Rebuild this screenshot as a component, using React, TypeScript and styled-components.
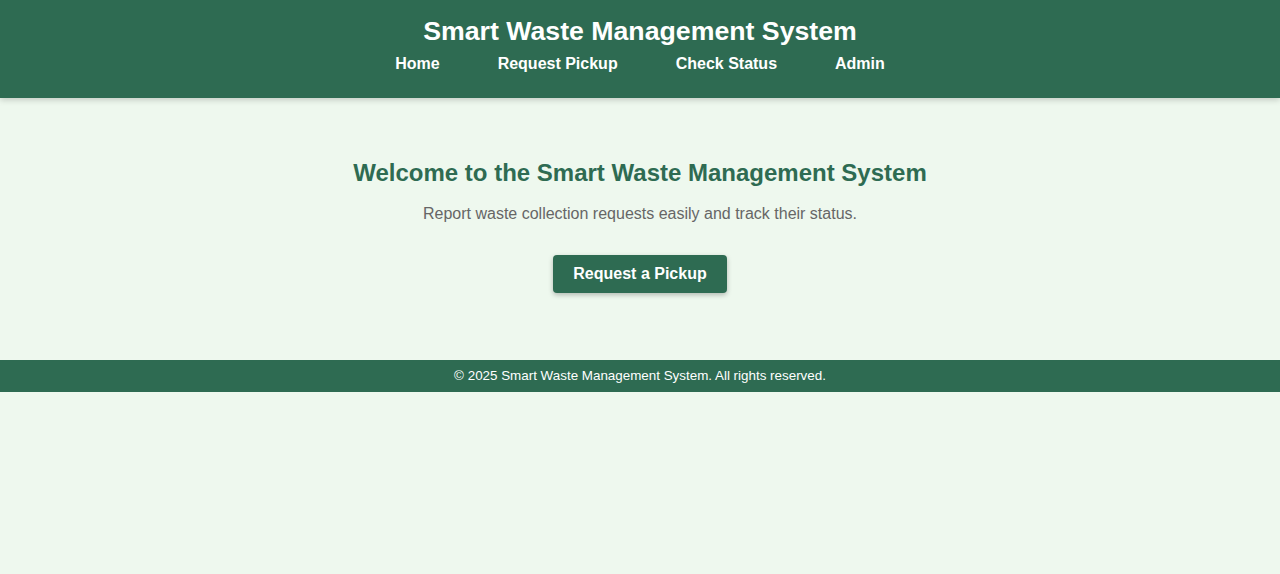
import React from "react";
import styled, { createGlobalStyle } from "styled-components";

const GlobalStyle = createGlobalStyle`
  html, body {
    margin: 0;
    padding: 0;
    background: #eef8ee;
    font-family: "Liberation Sans", Arial, sans-serif;
  }
`;

const Header = styled.header`
  background: #2e6b52;
  color: #ffffff;
  padding: 15px 0 22px;
  text-align: center;
  box-shadow: 0 2px 6px rgba(0, 0, 0, 0.18);
`;

const Title = styled.h1`
  margin: 0;
  font-size: 26.7px;
  line-height: 32px;
  font-weight: bold;
`;

const Nav = styled.nav`
  display: flex;
  justify-content: center;
  gap: 58px;
  margin-top: 5px;
`;

const NavLink = styled.a`
  color: #ffffff;
  text-decoration: none;
  font-size: 16px;
  font-weight: bold;
  line-height: 24px;
`;

const Hero = styled.main`
  text-align: center;
  padding: 60px 20px 67px;
`;

const Heading = styled.h2`
  margin: 0;
  color: #2e6b52;
  font-size: 24px;
  line-height: 30px;
`;

const Lead = styled.p`
  margin: 16px 0 0;
  color: #666666;
  font-size: 16px;
  line-height: 20px;
`;

const Button = styled.button`
  margin-top: 31px;
  background: #2e6b52;
  color: #ffffff;
  border: none;
  border-radius: 4px;
  padding: 0 20px;
  height: 38px;
  font-family: inherit;
  font-size: 16px;
  font-weight: bold;
  cursor: pointer;
  box-shadow: 0 2px 5px rgba(0, 0, 0, 0.25);
`;

const Footer = styled.footer`
  background: #2e6b52;
  color: #ffffff;
  text-align: center;
  font-size: 13.4px;
  line-height: 32px;
`;

export default function App() {
  const links = ["Home", "Request Pickup", "Check Status", "Admin"];
  return (
    <>
      <GlobalStyle />
      <Header>
        <Title>Smart Waste Management System</Title>
        <Nav>
          {links.map((l) => (
            <NavLink key={l} href="#">
              {l}
            </NavLink>
          ))}
        </Nav>
      </Header>
      <Hero>
        <Heading>Welcome to the Smart Waste Management System</Heading>
        <Lead>Report waste collection requests easily and track their status.</Lead>
        <Button>Request a Pickup</Button>
      </Hero>
      <Footer>© 2025 Smart Waste Management System. All rights reserved.</Footer>
    </>
  );
}
